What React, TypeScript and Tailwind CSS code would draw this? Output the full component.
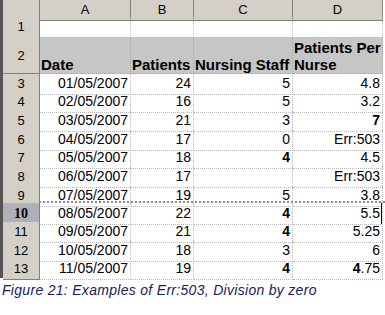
const rows: [string, string, string, string, string][] = [
  ['3', '01/05/2007', '24', '5', '4.8'],
  ['4', '02/05/2007', '16', '5', '3.2'],
  ['5', '03/05/2007', '21', '3', '7'],
  ['6', '04/05/2007', '17', '0', 'Err:503'],
  ['7', '05/05/2007', '18', '4', '4.5'],
  ['8', '06/05/2007', '17', '', 'Err:503'],
  ['9', '07/05/2007', '19', '5', '3.8'],
  ['10', '08/05/2007', '22', '4', '5.5'],
  ['11', '09/05/2007', '21', '4', '5.25'],
  ['12', '10/05/2007', '18', '3', '6'],
  ['13', '11/05/2007', '19', '4', '4.75'],
];

const heights = ['h-[18px]', 'h-[19px]', 'h-[19px]', 'h-[18px]', 'h-[19px]', 'h-[19px]', 'h-[17px]', 'h-[19px]', 'h-[19px]', 'h-[18px]', 'h-[19px]'];

function Bold4({ text }: { text: string }) {
  // the "4" and "7" glyphs render heavier in the original capture
  if (text === '4' || text === '7') return <span className="font-bold">{text}</span>;
  if (text === '4.75') return <><span className="font-bold">4</span>.75</>;
  return <>{text}</>;
}

export default function App() {
  const cols = 'grid grid-cols-[37px_91px_63px_99px_90px]';
  const cell = 'border-r border-b border-dotted border-[#b8b8b8] flex items-center justify-end pr-[2px] overflow-hidden';
  const rowHead = 'bg-[#d4d0c8] border-r border-b border-[#808080] flex items-center justify-center text-[13px]';

  return (
    <div className="w-[385px] h-[315px] bg-white text-black" style={{ fontFamily: '"Liberation Sans", Arial, sans-serif' }}>
      <div className="border-l-[3px] border-[#555] w-[385px]">
        {/* column headers */}
        <div className={`${cols} h-[17px] text-[13px]`}>
          <div className="bg-[#d4d0c8] border-r border-b border-[#808080]"></div>
          {['A', 'B', 'C', 'D'].map((c) => (
            <div key={c} className="bg-[#d4d0c8] border-r border-b border-[#808080] flex items-center justify-center">{c}</div>
          ))}
        </div>
        {/* row 1 */}
        <div className={`${cols} h-[20px]`}>
          <div className={rowHead}>1</div>
          <div className={cell}></div>
          <div className={cell}></div>
          <div className={cell}></div>
          <div className={cell}></div>
        </div>
        {/* row 2: headings */}
        <div className={`${cols} h-[37px] text-[15px] font-bold leading-[17px]`}>
          <div className={`${rowHead} font-normal`}>2</div>
          <div className="bg-[#c6c6c6] border-r border-b border-dotted border-[#a8a8a8] flex items-end pl-[1px]">Date</div>
          <div className="bg-[#c6c6c6] border-r border-b border-dotted border-[#a8a8a8] flex items-end pl-[1px]">Patients</div>
          <div className="bg-[#c6c6c6] border-r border-b border-dotted border-[#a8a8a8] flex items-end pl-[1px] whitespace-nowrap">Nursing Staff</div>
          <div className="bg-[#c6c6c6] border-r border-b border-dotted border-[#a8a8a8] flex items-end pl-[1px]">Patients Per<br />Nurse</div>
        </div>
        {/* data rows */}
        {rows.map(([n, date, pat, staff, ratio], i) => {
          const selected = n === '10';
          return (
            <div key={n} className={`${cols} ${heights[i]} text-[14px] ${n === '9' ? 'border-b-2 border-dotted border-[#8c8c8c]' : ''}`}>
              <div
                className={
                  selected
                    ? 'bg-[#aeb0ba] border-r border-b border-[#808080] flex items-center justify-center text-[14px] font-bold'
                    : rowHead
                }
                style={selected ? { fontFamily: '"Liberation Serif", "Times New Roman", serif' } : undefined}
              >
                {n}
              </div>
              <div className={cell}>{date}</div>
              <div className={cell}>{pat}</div>
              <div className={cell}><Bold4 text={staff} /></div>
              <div className={`${cell} relative`}>
                <Bold4 text={ratio} />
                {selected && <div className="absolute right-[-2px] top-0 bottom-0 w-[3px] bg-black"></div>}
              </div>
            </div>
          );
        })}
      </div>
      <div className="mt-[2px] pl-[2px] text-[14px] italic text-[#1a1a55] tracking-[0.3px]">
        Figure 21: Examples of Err:503, Division by zero
      </div>
    </div>
  );
}
